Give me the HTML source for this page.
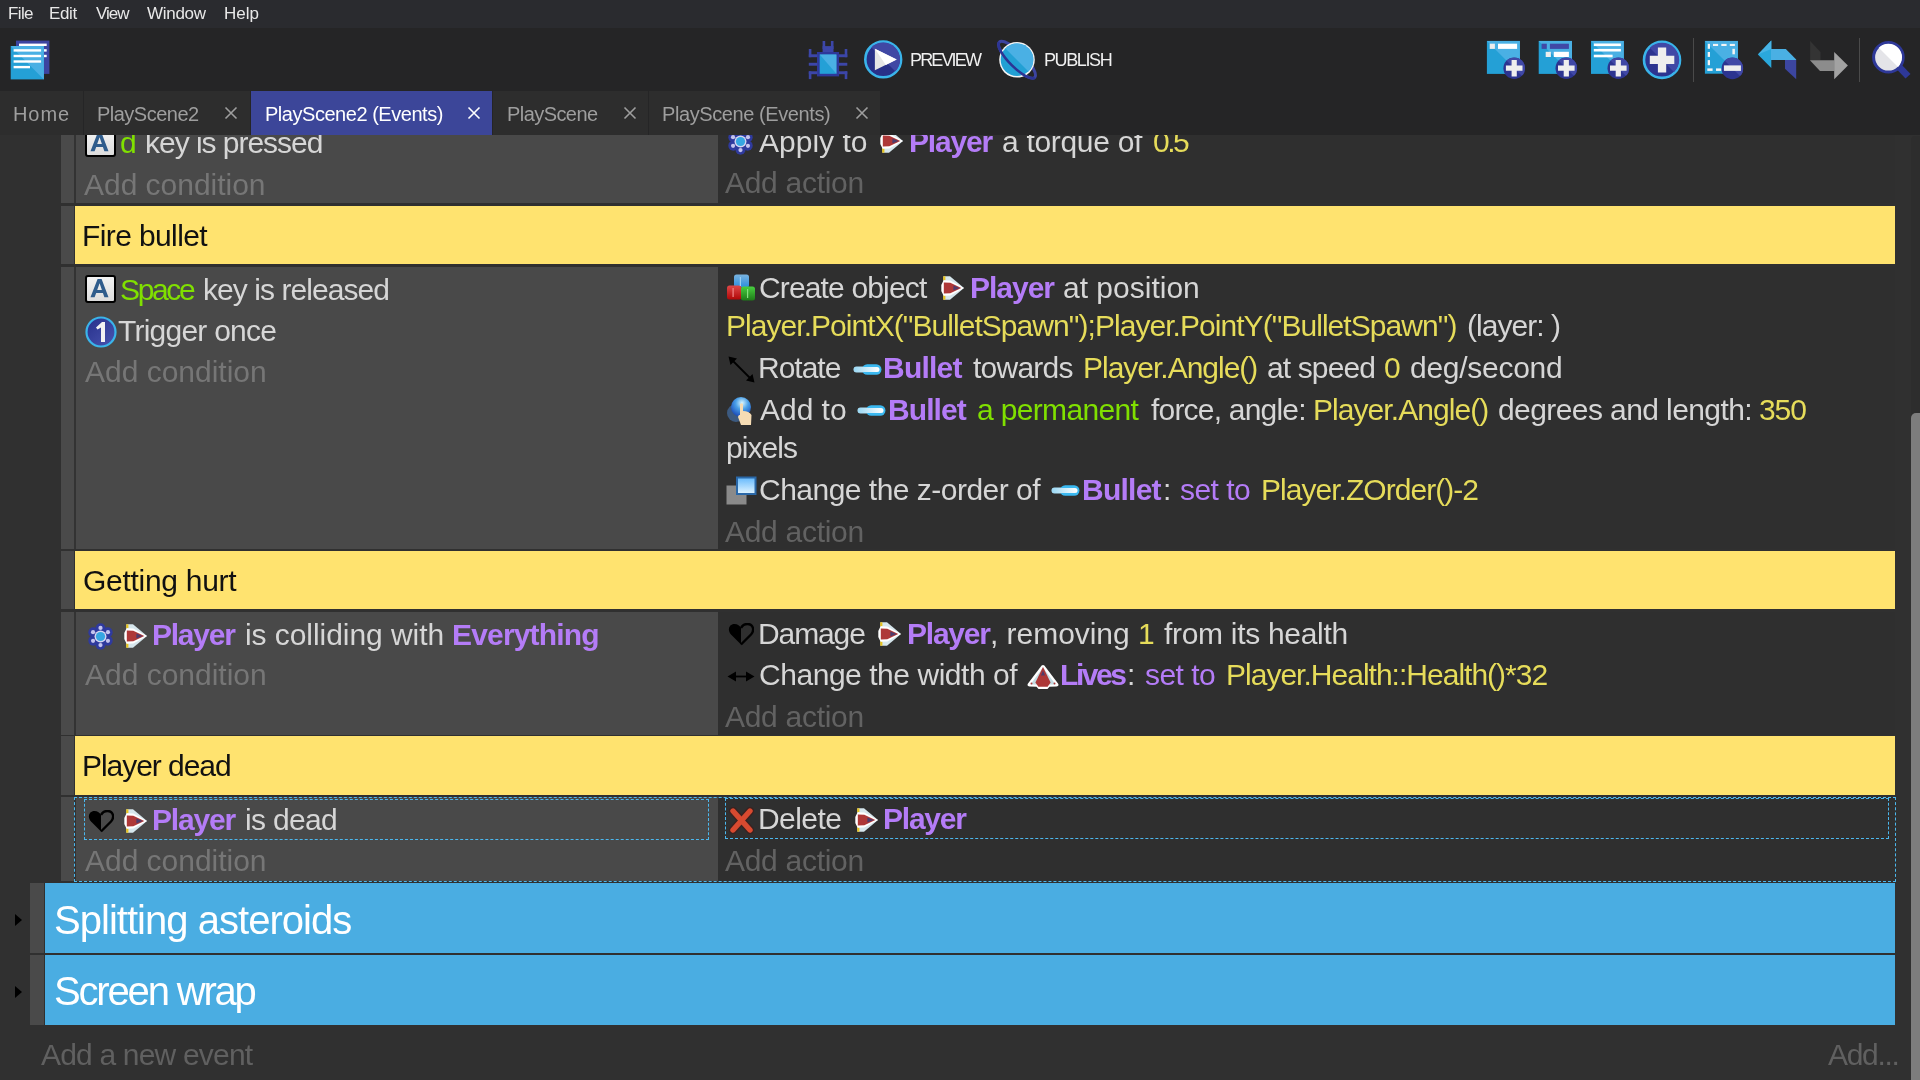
<!DOCTYPE html>
<html><head><meta charset="utf-8"><style>
html,body{margin:0;padding:0;width:1920px;height:1080px;overflow:hidden;background:#303030;position:relative}
.t{position:absolute;white-space:pre;font-family:"Liberation Sans", sans-serif;will-change:transform}
</style></head><body>
<div style="position:absolute;left:0px;top:135px;width:1920px;height:945px;background:#303030;"></div>
<div style="position:absolute;left:61px;top:120px;width:13px;height:83px;background:#4a4a4a;"></div>
<div style="position:absolute;left:74px;top:120px;width:2px;height:83px;background:#333333;"></div>
<div style="position:absolute;left:76px;top:120px;width:642px;height:83px;background:#494949;"></div>
<div style="position:absolute;left:718px;top:120px;width:1177px;height:83px;background:#2f2f2f;"></div>
<div style="position:absolute;left:61px;top:206px;width:13px;height:58px;background:#4a4a4a;"></div>
<div style="position:absolute;left:75px;top:206px;width:1820px;height:58px;background:#ffe36f;"></div>
<div style="position:absolute;left:61px;top:267px;width:13px;height:282px;background:#4a4a4a;"></div>
<div style="position:absolute;left:74px;top:267px;width:2px;height:282px;background:#333333;"></div>
<div style="position:absolute;left:76px;top:267px;width:642px;height:282px;background:#494949;"></div>
<div style="position:absolute;left:718px;top:267px;width:1177px;height:282px;background:#2f2f2f;"></div>
<div style="position:absolute;left:61px;top:551px;width:13px;height:58px;background:#4a4a4a;"></div>
<div style="position:absolute;left:75px;top:551px;width:1820px;height:58px;background:#ffe36f;"></div>
<div style="position:absolute;left:61px;top:612px;width:13px;height:123px;background:#4a4a4a;"></div>
<div style="position:absolute;left:74px;top:612px;width:2px;height:123px;background:#333333;"></div>
<div style="position:absolute;left:76px;top:612px;width:642px;height:123px;background:#494949;"></div>
<div style="position:absolute;left:718px;top:612px;width:1177px;height:123px;background:#2f2f2f;"></div>
<div style="position:absolute;left:61px;top:736px;width:13px;height:59px;background:#4a4a4a;"></div>
<div style="position:absolute;left:75px;top:736px;width:1820px;height:59px;background:#ffe36f;"></div>
<div style="position:absolute;left:61px;top:797px;width:13px;height:84px;background:#4a4a4a;"></div>
<div style="position:absolute;left:74px;top:797px;width:2px;height:84px;background:#333333;"></div>
<div style="position:absolute;left:76px;top:797px;width:642px;height:84px;background:#494949;"></div>
<div style="position:absolute;left:718px;top:797px;width:1177px;height:84px;background:#2f2f2f;"></div>
<div style="position:absolute;left:30px;top:883px;width:14px;height:70px;background:#4a4a4a;"></div>
<div style="position:absolute;left:45px;top:883px;width:1850px;height:70px;background:#4aade2;"></div>
<svg style="position:absolute;left:14px;top:913px" width="9" height="14" viewBox="0 0 9 14"><path d="M1 1 L8 7 L1 13 Z" fill="#000"/></svg>
<div style="position:absolute;left:30px;top:955px;width:14px;height:70px;background:#4a4a4a;"></div>
<div style="position:absolute;left:45px;top:955px;width:1850px;height:70px;background:#4aade2;"></div>
<svg style="position:absolute;left:14px;top:985px" width="9" height="14" viewBox="0 0 9 14"><path d="M1 1 L8 7 L1 13 Z" fill="#000"/></svg>
<div style="position:absolute;left:1911px;top:136px;width:9px;height:944px;background:#2d2d2d;border-radius:4px 0 0 0"></div>
<div style="position:absolute;left:1911px;top:413px;width:9px;height:667px;background:#7d7d7d;border-radius:5px 0 0 0"></div>
<svg style="position:absolute;left:85px;top:129px" width="31" height="28" viewBox="0 0 31 28"><defs><linearGradient id="kg" x1="0" y1="0" x2="0" y2="1"><stop offset="0" stop-color="#f4f4f4"/><stop offset="1" stop-color="#dcdcdc"/></linearGradient></defs>
<rect x="1" y="1" width="29" height="26" rx="2" fill="url(#kg)" stroke="#000" stroke-width="2"/>
<path fill-rule="evenodd" d="M5.5 22.2 L12.6 3.9 L16.6 3.9 L23.5 22.2 L19.4 22.2 L17.9 18 L11.2 18 L9.6 22.2 Z M12.2 15 L16.9 15 L14.6 8.2 Z" fill="#2f5c8c"/></svg>
<svg style="position:absolute;left:727px;top:128px" width="27" height="27" viewBox="0 0 27 27"><circle cx="13.50" cy="21.80" r="5" fill="#2f3a9e"/><circle cx="6.31" cy="17.65" r="5" fill="#2f3a9e"/><circle cx="6.31" cy="9.35" r="5" fill="#2f3a9e"/><circle cx="13.50" cy="5.20" r="5" fill="#2f3a9e"/><circle cx="20.69" cy="9.35" r="5" fill="#2f3a9e"/><circle cx="20.69" cy="17.65" r="5" fill="#2f3a9e"/><circle cx="13.5" cy="13.5" r="8.5" fill="#2f3a9e"/><circle cx="13.50" cy="22.10" r="2.1" fill="#c4c4ee"/><circle cx="6.05" cy="17.80" r="2.1" fill="#c4c4ee"/><circle cx="6.05" cy="9.20" r="2.1" fill="#c4c4ee"/><circle cx="13.50" cy="4.90" r="2.1" fill="#c4c4ee"/><circle cx="20.95" cy="9.20" r="2.1" fill="#c4c4ee"/><circle cx="20.95" cy="17.80" r="2.1" fill="#c4c4ee"/><circle cx="13.5" cy="13.5" r="6" fill="#d4d4f2"/><circle cx="13.5" cy="13.5" r="4.6" fill="#36a6e2"/></svg>
<svg style="position:absolute;left:880px;top:129px" width="24" height="24" viewBox="0 0 24 24"><path d="M2.4 0.3 L9 0.3 L23 12 L9 23.7 L2.4 23.7 Z" fill="#d6e6ec"/>
<rect x="2.2" y="0.3" width="2.2" height="4" fill="#e6c21e"/><rect x="2.2" y="19.3" width="2.2" height="4.4" fill="#e6c21e"/>
<path d="M0.3 9 L2.6 4.2 L9.3 4.6 L23 12 L9.3 19.4 L2.6 19.8 L0.3 15 Z" fill="#ffffff"/>
<path d="M2.8 6.4 L9.3 6.8 L20.3 12 L9.3 17.2 L2.8 17.6 Z" fill="#ae3838"/>
<path d="M12.4 9.6 L18.6 12 L12.4 14.4 Z" fill="#4e3c6c"/></svg>
<svg style="position:absolute;left:85px;top:275px" width="31" height="28" viewBox="0 0 31 28"><defs><linearGradient id="kg" x1="0" y1="0" x2="0" y2="1"><stop offset="0" stop-color="#f4f4f4"/><stop offset="1" stop-color="#dcdcdc"/></linearGradient></defs>
<rect x="1" y="1" width="29" height="26" rx="2" fill="url(#kg)" stroke="#000" stroke-width="2"/>
<path fill-rule="evenodd" d="M5.5 22.2 L12.6 3.9 L16.6 3.9 L23.5 22.2 L19.4 22.2 L17.9 18 L11.2 18 L9.6 22.2 Z M12.2 15 L16.9 15 L14.6 8.2 Z" fill="#2f5c8c"/></svg>
<svg style="position:absolute;left:85px;top:316px" width="32" height="32" viewBox="0 0 32 32"><defs><linearGradient id="og" x1="0" y1="0" x2="1" y2="1"><stop offset="0" stop-color="#262f8a"/><stop offset="1" stop-color="#4a55b0"/></linearGradient></defs>
<circle cx="16" cy="16" r="14.5" fill="url(#og)" stroke="#3ab4ea" stroke-width="2.2"/>
<path d="M11 11.5 L17 6 L20 6 L20 26 L16 26 L16 11.5 L12.5 13.5 Z" fill="#f2f2f2"/></svg>
<svg style="position:absolute;left:726px;top:273px" width="30" height="28" viewBox="0 0 30 28"><defs><linearGradient id="cb" x1="0" y1="0" x2="0" y2="1"><stop offset="0" stop-color="#7ab4e0"/><stop offset="1" stop-color="#2a8ee0"/></linearGradient>
<linearGradient id="cr" x1="0" y1="0" x2="0" y2="1"><stop offset="0" stop-color="#e04848"/><stop offset="1" stop-color="#b00808"/></linearGradient>
<linearGradient id="cg" x1="0" y1="0" x2="0" y2="1"><stop offset="0" stop-color="#48d040"/><stop offset="1" stop-color="#1e7a18"/></linearGradient></defs>
<rect x="8" y="1.5" width="15" height="13" rx="2.5" fill="url(#cb)"/>
<rect x="1" y="12.5" width="14.5" height="14" rx="2.5" fill="url(#cr)"/>
<rect x="15" y="13.5" width="14" height="14" rx="2.5" fill="url(#cg)"/>
<rect x="13.8" y="4" width="1.2" height="9" fill="#9ad0f4"/><rect x="6.5" y="15" width="1.2" height="9" fill="#f08888"/><rect x="21" y="16" width="1.2" height="9" fill="#88e080"/></svg>
<svg style="position:absolute;left:941px;top:276px" width="24" height="24" viewBox="0 0 24 24"><path d="M2.4 0.3 L9 0.3 L23 12 L9 23.7 L2.4 23.7 Z" fill="#d6e6ec"/>
<rect x="2.2" y="0.3" width="2.2" height="4" fill="#e6c21e"/><rect x="2.2" y="19.3" width="2.2" height="4.4" fill="#e6c21e"/>
<path d="M0.3 9 L2.6 4.2 L9.3 4.6 L23 12 L9.3 19.4 L2.6 19.8 L0.3 15 Z" fill="#ffffff"/>
<path d="M2.8 6.4 L9.3 6.8 L20.3 12 L9.3 17.2 L2.8 17.6 Z" fill="#ae3838"/>
<path d="M12.4 9.6 L18.6 12 L12.4 14.4 Z" fill="#4e3c6c"/></svg>
<svg style="position:absolute;left:727.5px;top:356px" width="27" height="27" viewBox="0 0 27 27"><path d="M5 5 L22 22" stroke="#000" stroke-width="1.8"/>
<path d="M0.5 0.5 L9 2.5 L2.5 9 Z" fill="#000"/><path d="M26.5 26.5 L18 24.5 L24.5 18 Z" fill="#000"/></svg>
<svg style="position:absolute;left:852.5px;top:363.5px" width="29" height="11" viewBox="0 0 29 11"><defs><linearGradient id="bg1" x1="0" y1="0" x2="1" y2="0"><stop offset="0" stop-color="#9ad8f4"/><stop offset="1" stop-color="#ffffff"/></linearGradient></defs>
<rect x="0.5" y="2.5" width="14" height="6" rx="3" fill="#a8def6"/>
<rect x="9" y="0.3" width="19.5" height="10.4" rx="5.2" fill="#3ab8f0"/>
<rect x="1" y="3" width="25.5" height="5" rx="2.5" fill="url(#bg1)"/></svg>
<svg style="position:absolute;left:726.5px;top:396px" width="28" height="30" viewBox="0 0 28 30"><defs><radialGradient id="fg" cx="0.55" cy="0.3" r="0.7"><stop offset="0" stop-color="#d8f6ff"/><stop offset="0.45" stop-color="#4aa0e8"/><stop offset="1" stop-color="#1a4ab8"/></radialGradient></defs>
<circle cx="9" cy="17" r="9" fill="#3c5a80"/>
<circle cx="14" cy="11" r="10" fill="url(#fg)"/>
<path d="M13 8 Q14.5 6.5 16 8 L16 15 Q22 15 24.5 19 L24 29 L14 29 L11 21 Q11.5 18.5 13 19 Z" fill="#f6dcb4"/></svg>
<svg style="position:absolute;left:857px;top:405px" width="29" height="11" viewBox="0 0 29 11"><defs><linearGradient id="bg1" x1="0" y1="0" x2="1" y2="0"><stop offset="0" stop-color="#9ad8f4"/><stop offset="1" stop-color="#ffffff"/></linearGradient></defs>
<rect x="0.5" y="2.5" width="14" height="6" rx="3" fill="#a8def6"/>
<rect x="9" y="0.3" width="19.5" height="10.4" rx="5.2" fill="#3ab8f0"/>
<rect x="1" y="3" width="25.5" height="5" rx="2.5" fill="url(#bg1)"/></svg>
<svg style="position:absolute;left:725.5px;top:475.5px" width="31" height="29" viewBox="0 0 31 29"><defs><linearGradient id="zg" x1="0" y1="0" x2="0" y2="1"><stop offset="0" stop-color="#6cbcfc"/><stop offset="1" stop-color="#dcf2ff"/></linearGradient></defs>
<rect x="0.5" y="9.5" width="20" height="19" fill="#8a8a8a"/>
<rect x="10" y="0.5" width="20.5" height="18.5" fill="#2a68a8"/>
<rect x="12" y="2.5" width="16.5" height="14.5" fill="url(#zg)"/></svg>
<svg style="position:absolute;left:1051px;top:485px" width="29" height="11" viewBox="0 0 29 11"><defs><linearGradient id="bg1" x1="0" y1="0" x2="1" y2="0"><stop offset="0" stop-color="#9ad8f4"/><stop offset="1" stop-color="#ffffff"/></linearGradient></defs>
<rect x="0.5" y="2.5" width="14" height="6" rx="3" fill="#a8def6"/>
<rect x="9" y="0.3" width="19.5" height="10.4" rx="5.2" fill="#3ab8f0"/>
<rect x="1" y="3" width="25.5" height="5" rx="2.5" fill="url(#bg1)"/></svg>
<svg style="position:absolute;left:87px;top:622.5px" width="27" height="27" viewBox="0 0 27 27"><circle cx="13.50" cy="21.80" r="5" fill="#2f3a9e"/><circle cx="6.31" cy="17.65" r="5" fill="#2f3a9e"/><circle cx="6.31" cy="9.35" r="5" fill="#2f3a9e"/><circle cx="13.50" cy="5.20" r="5" fill="#2f3a9e"/><circle cx="20.69" cy="9.35" r="5" fill="#2f3a9e"/><circle cx="20.69" cy="17.65" r="5" fill="#2f3a9e"/><circle cx="13.5" cy="13.5" r="8.5" fill="#2f3a9e"/><circle cx="13.50" cy="22.10" r="2.1" fill="#c4c4ee"/><circle cx="6.05" cy="17.80" r="2.1" fill="#c4c4ee"/><circle cx="6.05" cy="9.20" r="2.1" fill="#c4c4ee"/><circle cx="13.50" cy="4.90" r="2.1" fill="#c4c4ee"/><circle cx="20.95" cy="9.20" r="2.1" fill="#c4c4ee"/><circle cx="20.95" cy="17.80" r="2.1" fill="#c4c4ee"/><circle cx="13.5" cy="13.5" r="6" fill="#d4d4f2"/><circle cx="13.5" cy="13.5" r="4.6" fill="#36a6e2"/></svg>
<svg style="position:absolute;left:123.5px;top:623.5px" width="24" height="24" viewBox="0 0 24 24"><path d="M2.4 0.3 L9 0.3 L23 12 L9 23.7 L2.4 23.7 Z" fill="#d6e6ec"/>
<rect x="2.2" y="0.3" width="2.2" height="4" fill="#e6c21e"/><rect x="2.2" y="19.3" width="2.2" height="4.4" fill="#e6c21e"/>
<path d="M0.3 9 L2.6 4.2 L9.3 4.6 L23 12 L9.3 19.4 L2.6 19.8 L0.3 15 Z" fill="#ffffff"/>
<path d="M2.8 6.4 L9.3 6.8 L20.3 12 L9.3 17.2 L2.8 17.6 Z" fill="#ae3838"/>
<path d="M12.4 9.6 L18.6 12 L12.4 14.4 Z" fill="#4e3c6c"/></svg>
<svg style="position:absolute;left:727.5px;top:623px" width="26" height="23" viewBox="0 0 26 23"><path d="M13 21.5 L3 11.5 C-1 7 1 1 6.5 1 C9.5 1 12 3 13 5 Z" fill="#000"/>
<path d="M13 21.5 L23 11.5 C27 7 25 1 19.5 1 C16.5 1 14 3 13 5" fill="none" stroke="#000" stroke-width="2.4"/></svg>
<svg style="position:absolute;left:878px;top:622px" width="24" height="24" viewBox="0 0 24 24"><path d="M2.4 0.3 L9 0.3 L23 12 L9 23.7 L2.4 23.7 Z" fill="#d6e6ec"/>
<rect x="2.2" y="0.3" width="2.2" height="4" fill="#e6c21e"/><rect x="2.2" y="19.3" width="2.2" height="4.4" fill="#e6c21e"/>
<path d="M0.3 9 L2.6 4.2 L9.3 4.6 L23 12 L9.3 19.4 L2.6 19.8 L0.3 15 Z" fill="#ffffff"/>
<path d="M2.8 6.4 L9.3 6.8 L20.3 12 L9.3 17.2 L2.8 17.6 Z" fill="#ae3838"/>
<path d="M12.4 9.6 L18.6 12 L12.4 14.4 Z" fill="#4e3c6c"/></svg>
<svg style="position:absolute;left:727px;top:670.5px" width="28" height="11" viewBox="0 0 28 11"><path d="M0.5 5.5 L9 0.5 L9 10.5 Z M27.5 5.5 L19 0.5 L19 10.5 Z" fill="#000"/><rect x="7" y="4.6" width="14" height="1.8" fill="#000"/></svg>
<svg style="position:absolute;left:1026.5px;top:664.5px" width="32" height="24" viewBox="0 0 32 24"><path d="M16 0 Q17.5 0 18.5 2 L31 18.5 Q32.5 21 29.5 21.5 L22.5 21.8 L20.5 24 L11.5 24 L9.5 21.8 L2.5 21.5 Q-0.5 21 1 18.5 L13.5 2 Q14.5 0 16 0 Z" fill="#ffffff"/>
<path d="M16 2.6 L28.6 19.4 L3.4 19.4 Z" fill="#c4dbe2"/>
<path d="M16 2 L23.6 17.5 L20.6 21.8 L11.4 21.8 L8.4 17.5 Z" fill="#ad3838"/>
<circle cx="4.5" cy="18.6" r="1" fill="#ad3838"/><circle cx="27.5" cy="18.6" r="1" fill="#ad3838"/>
<path d="M16 5.5 L18 10.5 L14 10.5 Z" fill="#4e3c6c"/></svg>
<svg style="position:absolute;left:87.5px;top:810px" width="26" height="23" viewBox="0 0 26 23"><path d="M13 21.5 L3 11.5 C-1 7 1 1 6.5 1 C9.5 1 12 3 13 5 Z" fill="#000"/>
<path d="M13 21.5 L23 11.5 C27 7 25 1 19.5 1 C16.5 1 14 3 13 5" fill="none" stroke="#000" stroke-width="2.4"/></svg>
<svg style="position:absolute;left:123.5px;top:809px" width="24" height="24" viewBox="0 0 24 24"><path d="M2.4 0.3 L9 0.3 L23 12 L9 23.7 L2.4 23.7 Z" fill="#d6e6ec"/>
<rect x="2.2" y="0.3" width="2.2" height="4" fill="#e6c21e"/><rect x="2.2" y="19.3" width="2.2" height="4.4" fill="#e6c21e"/>
<path d="M0.3 9 L2.6 4.2 L9.3 4.6 L23 12 L9.3 19.4 L2.6 19.8 L0.3 15 Z" fill="#ffffff"/>
<path d="M2.8 6.4 L9.3 6.8 L20.3 12 L9.3 17.2 L2.8 17.6 Z" fill="#ae3838"/>
<path d="M12.4 9.6 L18.6 12 L12.4 14.4 Z" fill="#4e3c6c"/></svg>
<svg style="position:absolute;left:728.5px;top:807px" width="25" height="27" viewBox="0 0 25 27"><path d="M4 4 L21 23 M21 4 L4 23" stroke="#3a2220" stroke-width="8" stroke-linecap="round"/>
<path d="M4 4 L21 23 M21 4 L4 23" stroke="#d84a30" stroke-width="5.4" stroke-linecap="round"/></svg>
<svg style="position:absolute;left:854.5px;top:808px" width="24" height="24" viewBox="0 0 24 24"><path d="M2.4 0.3 L9 0.3 L23 12 L9 23.7 L2.4 23.7 Z" fill="#d6e6ec"/>
<rect x="2.2" y="0.3" width="2.2" height="4" fill="#e6c21e"/><rect x="2.2" y="19.3" width="2.2" height="4.4" fill="#e6c21e"/>
<path d="M0.3 9 L2.6 4.2 L9.3 4.6 L23 12 L9.3 19.4 L2.6 19.8 L0.3 15 Z" fill="#ffffff"/>
<path d="M2.8 6.4 L9.3 6.8 L20.3 12 L9.3 17.2 L2.8 17.6 Z" fill="#ae3838"/>
<path d="M12.4 9.6 L18.6 12 L12.4 14.4 Z" fill="#4e3c6c"/></svg>
<div class="t" style="left:82.00px;top:220.60px;font-size:30px;line-height:30px;color:#111111;font-weight:400;letter-spacing:-0.608px">Fire bullet</div>
<div class="t" style="left:83.00px;top:565.61px;font-size:30px;line-height:30px;color:#111111;font-weight:400;letter-spacing:-0.283px">Getting hurt</div>
<div class="t" style="left:82.00px;top:750.61px;font-size:30px;line-height:30px;color:#111111;font-weight:400;letter-spacing:-1.052px">Player dead</div>
<div class="t" style="left:53.60px;top:900.14px;font-size:40px;line-height:40px;color:#ffffff;font-weight:400;letter-spacing:-0.973px">Splitting asteroids</div>
<div class="t" style="left:53.60px;top:971.44px;font-size:40px;line-height:40px;color:#ffffff;font-weight:400;letter-spacing:-2.170px">Screen wrap</div>
<div class="t" style="left:41.20px;top:1040.11px;font-size:30px;line-height:30px;color:#606060;font-weight:400;letter-spacing:-0.811px">Add a new event</div>
<div class="t" style="left:1828.30px;top:1040.11px;font-size:30px;line-height:30px;color:#606060;font-weight:400;letter-spacing:-1.310px">Add...</div>
<div class="t" style="left:119.70px;top:128.30px;font-size:30px;line-height:30px;color:#80e000;font-weight:400;letter-spacing:0.000px">d</div>
<div class="t" style="left:145.10px;top:128.30px;font-size:30.0px;line-height:30.0px;color:#d6d6d6;font-weight:400;letter-spacing:-1.028px">key is pressed</div>
<div class="t" style="left:84.40px;top:169.60px;font-size:30px;line-height:30px;color:#767676;font-weight:400;letter-spacing:-0.026px">Add condition</div>
<div class="t" style="left:759.00px;top:126.61px;font-size:30.0px;line-height:30.0px;color:#d6d6d6;font-weight:400;letter-spacing:0.005px">Apply to</div>
<div class="t" style="left:908.50px;top:126.61px;font-size:30px;line-height:30px;color:#b47cf7;font-weight:700;letter-spacing:-1.180px">Player</div>
<div class="t" style="left:1002.00px;top:126.61px;font-size:30.0px;line-height:30.0px;color:#d6d6d6;font-weight:400;letter-spacing:-0.310px">a torque of</div>
<div class="t" style="left:1153.00px;top:126.61px;font-size:30px;line-height:30px;color:#e6dc5a;font-weight:400;letter-spacing:-2.510px">0.5</div>
<div class="t" style="left:725.00px;top:167.60px;font-size:30px;line-height:30px;color:#626262;font-weight:400;letter-spacing:-0.287px">Add action</div>
<div class="t" style="left:119.60px;top:274.81px;font-size:30px;line-height:30px;color:#80e000;font-weight:400;letter-spacing:-2.370px">Space</div>
<div class="t" style="left:202.90px;top:274.81px;font-size:30.0px;line-height:30.0px;color:#d6d6d6;font-weight:400;letter-spacing:-0.937px">key is released</div>
<div class="t" style="left:118.00px;top:316.31px;font-size:30.0px;line-height:30.0px;color:#d6d6d6;font-weight:400;letter-spacing:-0.765px">Trigger once</div>
<div class="t" style="left:84.50px;top:356.61px;font-size:30px;line-height:30px;color:#767676;font-weight:400;letter-spacing:-0.010px">Add condition</div>
<div class="t" style="left:758.70px;top:273.11px;font-size:30.0px;line-height:30.0px;color:#d6d6d6;font-weight:400;letter-spacing:-0.850px">Create object</div>
<div class="t" style="left:969.90px;top:273.11px;font-size:30px;line-height:30px;color:#b47cf7;font-weight:700;letter-spacing:-1.020px">Player</div>
<div class="t" style="left:1063.40px;top:273.11px;font-size:30.0px;line-height:30.0px;color:#d6d6d6;font-weight:400;letter-spacing:0.003px">at position</div>
<div class="t" style="left:726.40px;top:310.50px;font-size:30px;line-height:30px;color:#e6dc5a;font-weight:400;letter-spacing:-0.951px">Player.PointX(&quot;BulletSpawn&quot;);Player.PointY(&quot;BulletSpawn&quot;)</div>
<div class="t" style="left:1467.40px;top:310.50px;font-size:30.0px;line-height:30.0px;color:#d6d6d6;font-weight:400;letter-spacing:-0.973px">(layer: )</div>
<div class="t" style="left:757.70px;top:352.50px;font-size:30.0px;line-height:30.0px;color:#d6d6d6;font-weight:400;letter-spacing:-1.001px">Rotate</div>
<div class="t" style="left:883.40px;top:352.50px;font-size:30px;line-height:30px;color:#b47cf7;font-weight:700;letter-spacing:-0.789px">Bullet</div>
<div class="t" style="left:973.20px;top:352.50px;font-size:30.0px;line-height:30.0px;color:#d6d6d6;font-weight:400;letter-spacing:-0.757px">towards</div>
<div class="t" style="left:1082.60px;top:352.50px;font-size:30px;line-height:30px;color:#e6dc5a;font-weight:400;letter-spacing:-1.010px">Player.Angle()</div>
<div class="t" style="left:1267.30px;top:352.50px;font-size:30.0px;line-height:30.0px;color:#d6d6d6;font-weight:400;letter-spacing:-0.873px">at speed</div>
<div class="t" style="left:1384.00px;top:352.50px;font-size:30px;line-height:30px;color:#e6dc5a;font-weight:400;letter-spacing:0.000px">0</div>
<div class="t" style="left:1410.00px;top:352.50px;font-size:30.0px;line-height:30.0px;color:#d6d6d6;font-weight:400;letter-spacing:-0.271px">deg/second</div>
<div class="t" style="left:759.70px;top:394.91px;font-size:30.0px;line-height:30.0px;color:#d6d6d6;font-weight:400;letter-spacing:-0.030px">Add to</div>
<div class="t" style="left:887.90px;top:394.91px;font-size:30px;line-height:30px;color:#b47cf7;font-weight:700;letter-spacing:-0.909px">Bullet</div>
<div class="t" style="left:977.40px;top:394.91px;font-size:30px;line-height:30px;color:#80e000;font-weight:400;letter-spacing:-0.661px">a permanent</div>
<div class="t" style="left:1150.60px;top:394.91px;font-size:30.0px;line-height:30.0px;color:#d6d6d6;font-weight:400;letter-spacing:-0.801px">force, angle:</div>
<div class="t" style="left:1313.20px;top:394.91px;font-size:30px;line-height:30px;color:#e6dc5a;font-weight:400;letter-spacing:-0.941px">Player.Angle()</div>
<div class="t" style="left:1498.20px;top:394.91px;font-size:30.0px;line-height:30.0px;color:#d6d6d6;font-weight:400;letter-spacing:-0.588px">degrees and length:</div>
<div class="t" style="left:1759.20px;top:394.91px;font-size:30px;line-height:30px;color:#e6dc5a;font-weight:400;letter-spacing:-1.085px">350</div>
<div class="t" style="left:725.75px;top:432.71px;font-size:30.0px;line-height:30.0px;color:#d6d6d6;font-weight:400;letter-spacing:-0.940px">pixels</div>
<div class="t" style="left:758.70px;top:475.00px;font-size:30.0px;line-height:30.0px;color:#d6d6d6;font-weight:400;letter-spacing:-0.515px">Change the z-order of</div>
<div class="t" style="left:1082.40px;top:475.00px;font-size:30px;line-height:30px;color:#b47cf7;font-weight:700;letter-spacing:-0.749px">Bullet</div>
<div class="t" style="left:1162.90px;top:475.00px;font-size:30.0px;line-height:30.0px;color:#d6d6d6;font-weight:400;letter-spacing:0.000px">:</div>
<div class="t" style="left:1180.20px;top:475.00px;font-size:30px;line-height:30px;color:#b47cf7;font-weight:400;letter-spacing:-0.538px">set to</div>
<div class="t" style="left:1261.30px;top:475.00px;font-size:30px;line-height:30px;color:#e6dc5a;font-weight:400;letter-spacing:-0.962px">Player.ZOrder()-2</div>
<div class="t" style="left:725.00px;top:516.90px;font-size:30px;line-height:30px;color:#626262;font-weight:400;letter-spacing:-0.287px">Add action</div>
<div class="t" style="left:152.20px;top:620.21px;font-size:30px;line-height:30px;color:#b47cf7;font-weight:700;letter-spacing:-1.240px">Player</div>
<div class="t" style="left:244.60px;top:620.21px;font-size:30.0px;line-height:30.0px;color:#d6d6d6;font-weight:400;letter-spacing:-0.062px">is colliding with</div>
<div class="t" style="left:451.70px;top:620.21px;font-size:30px;line-height:30px;color:#b47cf7;font-weight:700;letter-spacing:-0.824px">Everything</div>
<div class="t" style="left:84.50px;top:660.40px;font-size:30px;line-height:30px;color:#767676;font-weight:400;letter-spacing:-0.010px">Add condition</div>
<div class="t" style="left:757.70px;top:618.71px;font-size:30.0px;line-height:30.0px;color:#d6d6d6;font-weight:400;letter-spacing:-1.102px">Damage</div>
<div class="t" style="left:906.60px;top:618.71px;font-size:30px;line-height:30px;color:#b47cf7;font-weight:700;letter-spacing:-1.220px">Player</div>
<div class="t" style="left:990.00px;top:618.71px;font-size:30.0px;line-height:30.0px;color:#d6d6d6;font-weight:400;letter-spacing:-0.041px">, removing</div>
<div class="t" style="left:1138.00px;top:618.71px;font-size:30px;line-height:30px;color:#e6dc5a;font-weight:400;letter-spacing:0.000px">1</div>
<div class="t" style="left:1163.75px;top:618.71px;font-size:30.0px;line-height:30.0px;color:#d6d6d6;font-weight:400;letter-spacing:-0.302px">from its health</div>
<div class="t" style="left:758.70px;top:660.21px;font-size:30.0px;line-height:30.0px;color:#d6d6d6;font-weight:400;letter-spacing:-0.456px">Change the width of</div>
<div class="t" style="left:1059.75px;top:660.21px;font-size:30px;line-height:30px;color:#b47cf7;font-weight:700;letter-spacing:-2.445px">Lives</div>
<div class="t" style="left:1126.75px;top:660.21px;font-size:30.0px;line-height:30.0px;color:#d6d6d6;font-weight:400;letter-spacing:0.000px">:</div>
<div class="t" style="left:1145.00px;top:660.21px;font-size:30px;line-height:30px;color:#b47cf7;font-weight:400;letter-spacing:-0.538px">set to</div>
<div class="t" style="left:1226.00px;top:660.21px;font-size:30px;line-height:30px;color:#e6dc5a;font-weight:400;letter-spacing:-0.986px">Player.Health::Health()*32</div>
<div class="t" style="left:725.00px;top:702.11px;font-size:30px;line-height:30px;color:#626262;font-weight:400;letter-spacing:-0.287px">Add action</div>
<div class="t" style="left:152.20px;top:805.31px;font-size:30px;line-height:30px;color:#b47cf7;font-weight:700;letter-spacing:-1.180px">Player</div>
<div class="t" style="left:244.70px;top:805.31px;font-size:30.0px;line-height:30.0px;color:#d6d6d6;font-weight:400;letter-spacing:-0.659px">is dead</div>
<div class="t" style="left:84.70px;top:846.31px;font-size:30px;line-height:30px;color:#767676;font-weight:400;letter-spacing:-0.026px">Add condition</div>
<div class="t" style="left:758.20px;top:804.11px;font-size:30.0px;line-height:30.0px;color:#d6d6d6;font-weight:400;letter-spacing:-0.567px">Delete</div>
<div class="t" style="left:883.20px;top:804.11px;font-size:30px;line-height:30px;color:#b47cf7;font-weight:700;letter-spacing:-1.220px">Player</div>
<div class="t" style="left:725.00px;top:846.31px;font-size:30px;line-height:30px;color:#626262;font-weight:400;letter-spacing:-0.287px">Add action</div>
<div style="position:absolute;left:74px;top:797px;width:1820px;height:83px;border:1px dashed #4cb8ee"></div>
<div style="position:absolute;left:84px;top:799px;width:623px;height:39px;border:1px dashed #4cb8ee"></div>
<div style="position:absolute;left:725px;top:798px;width:1162px;height:39px;border:1px dashed #4cb8ee"></div>
<div style="position:absolute;left:0px;top:0px;width:1920px;height:28px;background:#2a2b2f;"></div>
<div style="position:absolute;left:0px;top:28px;width:1920px;height:63px;background:#252526;"></div>
<div style="position:absolute;left:0px;top:91px;width:1920px;height:44px;background:#252526;"></div>
<div style="position:absolute;left:0px;top:91px;width:83px;height:44px;background:#2d2d2d;"></div>
<div style="position:absolute;left:84px;top:91px;width:166px;height:44px;background:#2d2d2d;"></div>
<div style="position:absolute;left:493px;top:91px;width:155px;height:44px;background:#2d2d2d;"></div>
<div style="position:absolute;left:649px;top:91px;width:231px;height:44px;background:#2d2d2d;"></div>
<div style="position:absolute;left:251px;top:91px;width:241px;height:44px;background:#3c4699;"></div>
<svg style="position:absolute;left:223.5px;top:105.6px" width="14" height="14" viewBox="0 0 14 14"><path d="M1.5 1.5 L12.5 12.5 M12.5 1.5 L1.5 12.5" stroke="#9e9e9e" stroke-width="1.6"/></svg>
<svg style="position:absolute;left:467px;top:105.6px" width="14" height="14" viewBox="0 0 14 14"><path d="M1.5 1.5 L12.5 12.5 M12.5 1.5 L1.5 12.5" stroke="#ffffff" stroke-width="1.6"/></svg>
<svg style="position:absolute;left:622.5px;top:105.6px" width="14" height="14" viewBox="0 0 14 14"><path d="M1.5 1.5 L12.5 12.5 M12.5 1.5 L1.5 12.5" stroke="#9e9e9e" stroke-width="1.6"/></svg>
<svg style="position:absolute;left:854.5px;top:105.6px" width="14" height="14" viewBox="0 0 14 14"><path d="M1.5 1.5 L12.5 12.5 M12.5 1.5 L1.5 12.5" stroke="#9e9e9e" stroke-width="1.6"/></svg>
<svg style="position:absolute;left:0px;top:28px" width="1920" height="63" viewBox="0 0 1920 63"><g transform="translate(0,-28)"><rect x="16" y="40.6" width="33.4" height="33.3" fill="#3c44a0"/><rect x="19" y="43.6" width="27.7" height="2.4" fill="#fff"/><rect x="44" y="49.2" width="2.7" height="2.4" fill="#fff"/><rect x="44" y="54.8" width="2.7" height="2.4" fill="#fff"/><rect x="10.7" y="46.1" width="33.2" height="33.3" fill="#24a0d6"/><path d="M10.7 46.1 H43.9 V79.4 Z" fill="#4ab0e4"/><rect x="13.6" y="49.2" width="27.5" height="2.4" fill="#fff"/><rect x="13.6" y="54.8" width="27.5" height="2.4" fill="#fff"/><rect x="13.6" y="60.3" width="27.5" height="2.4" fill="#fff"/><rect x="13.6" y="65.9" width="16.4" height="2.4" fill="#fff"/><rect x="822.6" y="41" width="2.6" height="8" fill="#3c46a8"/><rect x="830.9" y="41" width="2.6" height="8" fill="#3c46a8"/><rect x="822.6" y="46.1" width="10.9" height="6.5" fill="#3c46a8"/><rect x="817" y="52" width="22.1" height="24.4" fill="#2e389a"/><rect x="819.7" y="54.6" width="16.699999999999932" height="19.199999999999996" fill="#24a0d6"/><path d="M819.7 54.6 L836.4 54.6 L836.4 73.8 Z" fill="#4ab0e4"/><rect x="808.8" y="54.3" width="8.5" height="2.9" fill="#3c46a8"/><rect x="838.8" y="54.3" width="8.5" height="2.9" fill="#3c46a8"/><rect x="808.8" y="49" width="2.6" height="8.2" fill="#3c46a8"/><rect x="844.7" y="49" width="2.6" height="8.2" fill="#3c46a8"/><rect x="808.8" y="62.8" width="8.5" height="2.9" fill="#3c46a8"/><rect x="838.8" y="62.8" width="8.5" height="2.9" fill="#3c46a8"/><rect x="808.8" y="71.3" width="8.5" height="2.9" fill="#3c46a8"/><rect x="838.8" y="71.3" width="8.5" height="2.9" fill="#3c46a8"/><rect x="808.8" y="71.3" width="2.6" height="7.8" fill="#3c46a8"/><rect x="844.7" y="71.3" width="2.6" height="7.8" fill="#3c46a8"/><clipPath id="pc"><circle cx="883.2" cy="59.4" r="17"/></clipPath><circle cx="883.2" cy="59.4" r="17.9" fill="#283088" stroke="#3ab4ea" stroke-width="2.6"/><path d="M866 42 L900 42 L900 76 Z" fill="#4048a4" clip-path="url(#pc)"/><path d="M874.9 48.75 L896.7 59.6 L874.9 70.3 Z" fill="#e6e6e6"/><path d="M874.9 48.75 L896.7 59.6 L885.8 65 Z" fill="#ffffff"/><clipPath id="gfront"><path d="M970 12.8 L1050 92.8 L970 92.8 Z"/></clipPath><ellipse cx="1017" cy="59.8" rx="25" ry="7.5" transform="rotate(45 1017 59.8)" fill="none" stroke="#3c44a0" stroke-width="3"/><circle cx="1017" cy="59.8" r="17.8" fill="#f4f4f4"/><clipPath id="gc"><circle cx="1017" cy="59.8" r="16.3"/></clipPath><circle cx="1017" cy="59.8" r="16.3" fill="#22a0d4"/><path d="M995 38 L1040 38 L1040 83 Z" fill="#4ab0e4" clip-path="url(#gc)"/><g clip-path="url(#gfront)"><ellipse cx="1017" cy="59.8" rx="25" ry="7.5" transform="rotate(45 1017 59.8)" fill="none" stroke="#2c3494" stroke-width="2.6"/></g><rect x="1486.9" y="40.9" width="33.0" height="33.00000000000001" fill="#24a0d6"/><path d="M1486.9 40.9 L1519.9 40.9 L1519.9 73.9 Z" fill="#4ab0e4"/><rect x="1489.7" y="43.7" width="5.2" height="5.2" fill="#eee"/><rect x="1498" y="43.7" width="19.1" height="5.2" fill="#fff"/><clipPath id="bc1514"><circle cx="1514.2" cy="68.2" r="10.8"/></clipPath><circle cx="1514.2" cy="68.2" r="10.8" fill="#2c3490"/><path d="M1503.4 57.400000000000006 L1525.0 57.400000000000006 L1525.0 79.0 Z" fill="#4048a6" clip-path="url(#bc1514)"/><path d="M1505.9 65.60000000000001 H1511.6000000000001 V59.900000000000006 H1516.8 V65.60000000000001 H1522.5 V70.8 H1516.8 V76.5 H1511.6000000000001 V70.8 H1505.9 Z" fill="#eeeeee"/><rect x="1538.7" y="40.9" width="33.299999999999955" height="33.00000000000001" fill="#24a0d6"/><path d="M1538.7 40.9 L1572 40.9 L1572 73.9 Z" fill="#4ab0e4"/><rect x="1541.6" y="43.7" width="5.2" height="5.2" fill="#4048a6"/><rect x="1549.9" y="43.7" width="19" height="5.2" fill="#4048a6"/><rect x="1545.7" y="51.8" width="5.2" height="5.2" fill="#eee"/><rect x="1553.8" y="51.8" width="15.1" height="5.2" fill="#fff"/><clipPath id="bc1566"><circle cx="1566.3" cy="68.2" r="10.8"/></clipPath><circle cx="1566.3" cy="68.2" r="10.8" fill="#2c3490"/><path d="M1555.5 57.400000000000006 L1577.1 57.400000000000006 L1577.1 79.0 Z" fill="#4048a6" clip-path="url(#bc1566)"/><path d="M1558.0 65.60000000000001 H1563.7 V59.900000000000006 H1568.8999999999999 V65.60000000000001 H1574.6 V70.8 H1568.8999999999999 V76.5 H1563.7 V70.8 H1558.0 Z" fill="#eeeeee"/><rect x="1591" y="40.9" width="32.799999999999955" height="33.00000000000001" fill="#24a0d6"/><path d="M1591 40.9 L1623.8 40.9 L1623.8 73.9 Z" fill="#4ab0e4"/><rect x="1593.8" y="43.5" width="27.1" height="2.6" fill="#fff"/><rect x="1593.8" y="48.9" width="27.1" height="2.6" fill="#fff"/><rect x="1593.8" y="54.7" width="18.8" height="2.6" fill="#fff"/><clipPath id="bc1618"><circle cx="1618.3" cy="68.2" r="10.8"/></clipPath><circle cx="1618.3" cy="68.2" r="10.8" fill="#2c3490"/><path d="M1607.5 57.400000000000006 L1629.1 57.400000000000006 L1629.1 79.0 Z" fill="#4048a6" clip-path="url(#bc1618)"/><path d="M1610.0 65.60000000000001 H1615.7 V59.900000000000006 H1620.8999999999999 V65.60000000000001 H1626.6 V70.8 H1620.8999999999999 V76.5 H1615.7 V70.8 H1610.0 Z" fill="#eeeeee"/><clipPath id="ac"><circle cx="1662" cy="59.9" r="17.2"/></clipPath><circle cx="1662" cy="59.9" r="18" fill="#2c3490" stroke="#3ab4ea" stroke-width="2.6"/><path d="M1640 38 H1684 V82 Z" fill="#4048a6" clip-path="url(#ac)"/><path d="M1649.8 55.7 H1657.9 V47.6 H1666.2 V55.7 H1674.3 V64 H1666.2 V72.4 H1657.9 V64 H1649.8 Z" fill="#eeeeee"/><rect x="1693" y="38" width="1" height="44" fill="#4a4a4a"/><rect x="1859" y="38" width="1" height="44" fill="#4a4a4a"/><rect x="1704.9" y="40.9" width="33.0" height="32.800000000000004" fill="#24a0d6"/><path d="M1704.9 40.9 L1737.9 40.9 L1737.9 73.7 Z" fill="#4ab0e4"/><rect x="1707.7" y="43.9" width="2.3" height="4.9" fill="#f4f4f4"/><rect x="1713" y="43.9" width="5.1" height="2.1" fill="#f4f4f4"/><rect x="1721.3" y="43.9" width="5.3" height="2.1" fill="#f4f4f4"/><rect x="1729.8" y="43.9" width="5.1" height="2.1" fill="#f4f4f4"/><rect x="1707.7" y="52" width="2.3" height="4.9" fill="#f4f4f4"/><rect x="1707.7" y="60.1" width="2.3" height="5.1" fill="#f4f4f4"/><rect x="1707.3" y="68.4" width="5.3" height="2.5" fill="#f4f4f4"/><rect x="1716" y="68.4" width="5.3" height="2.5" fill="#f4f4f4"/><rect x="1732.4" y="48.8" width="2.5" height="5.5" fill="#f4f4f4"/><clipPath id="bc1732"><circle cx="1732.4" cy="68.4" r="10.8"/></clipPath><circle cx="1732.4" cy="68.4" r="10.8" fill="#2c3490"/><path d="M1721.6000000000001 57.60000000000001 L1743.2 57.60000000000001 L1743.2 79.2 Z" fill="#4048a6" clip-path="url(#bc1732)"/><rect x="1723.9" y="65.4" width="17" height="5.5" fill="#eeeeee"/><path d="M1757.9 54.6 L1771.3 40.6 L1771.3 68 Z" fill="#2aa8dc"/><path d="M1757.9 54.6 L1771.3 40.6 L1771.3 49 Z" fill="#48b4e6"/><path d="M1771 48.9 L1785.8 48.9 L1796.2 59.5 L1796.2 60.1 L1771 60.1 Z" fill="#4ab0e4"/><path d="M1785 60.1 L1796.2 60.1 L1796.2 79.2 L1785 68.8 Z" fill="#3c46a0"/><path d="M1810.1 40.9 L1820.5 51.9 L1820.5 60.3 L1810.1 60.3 Z" fill="#343434"/><path d="M1809.9 60.3 L1834.5 60.3 L1834.5 71 L1820 71 Z" fill="#8c8c8c"/><path d="M1834.2 51.9 L1847.9 65.5 L1834.2 79.2 Z" fill="#a2a2a2"/><path d="M1895.5 68 L1900.5 63.5 L1910.5 74 L1905.5 78.6 Z" fill="#2e3898"/><clipPath id="sc"><circle cx="1888.4" cy="57.3" r="13.6"/></clipPath><circle cx="1888.4" cy="57.3" r="14.8" fill="#e4e4e8" stroke="#2e3898" stroke-width="3"/><path d="M1872 41 H1905 V74 Z" fill="#ffffff" clip-path="url(#sc)"/></g></svg>
<div class="t" style="left:8.00px;top:5.41px;font-size:17px;line-height:17px;color:#e8e8e8;font-weight:400;letter-spacing:-0.613px">File</div>
<div class="t" style="left:49.20px;top:5.41px;font-size:17px;line-height:17px;color:#e8e8e8;font-weight:400;letter-spacing:-0.357px">Edit</div>
<div class="t" style="left:95.50px;top:5.41px;font-size:17px;line-height:17px;color:#e8e8e8;font-weight:400;letter-spacing:-0.988px">View</div>
<div class="t" style="left:147.30px;top:5.41px;font-size:17px;line-height:17px;color:#e8e8e8;font-weight:400;letter-spacing:-0.297px">Window</div>
<div class="t" style="left:223.60px;top:5.41px;font-size:17px;line-height:17px;color:#e8e8e8;font-weight:400;letter-spacing:-0.003px">Help</div>
<div class="t" style="left:13.00px;top:104.27px;font-size:20px;line-height:20px;color:#9e9e9e;font-weight:400;letter-spacing:0.924px">Home</div>
<div class="t" style="left:97.00px;top:104.27px;font-size:20px;line-height:20px;color:#9e9e9e;font-weight:400;letter-spacing:-0.513px">PlayScene2</div>
<div class="t" style="left:264.70px;top:104.27px;font-size:20px;line-height:20px;color:#ffffff;font-weight:400;letter-spacing:-0.467px">PlayScene2 (Events)</div>
<div class="t" style="left:507.00px;top:104.27px;font-size:20px;line-height:20px;color:#9e9e9e;font-weight:400;letter-spacing:-0.562px">PlayScene</div>
<div class="t" style="left:662.00px;top:104.27px;font-size:20px;line-height:20px;color:#9e9e9e;font-weight:400;letter-spacing:-0.410px">PlayScene (Events)</div>
<div class="t" style="left:909.80px;top:51.46px;font-size:18px;line-height:18px;color:#f0f0f0;font-weight:400;letter-spacing:-1.854px">PREVIEW</div>
<div class="t" style="left:1044.00px;top:51.46px;font-size:18px;line-height:18px;color:#f0f0f0;font-weight:400;letter-spacing:-1.388px">PUBLISH</div>
</body></html>
